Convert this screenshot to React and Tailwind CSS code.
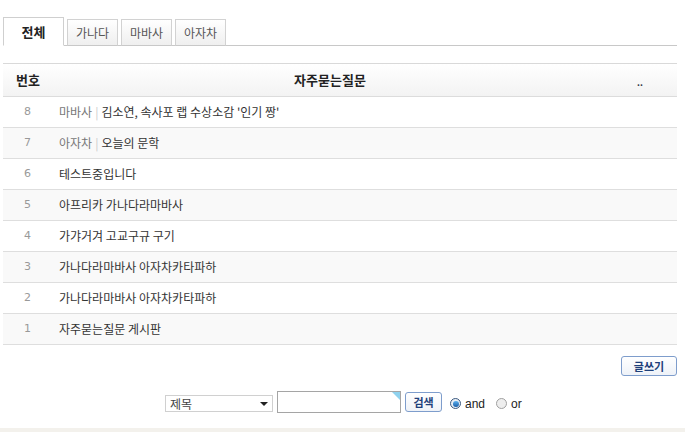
const TABS = ["전체", "가나다", "마바사", "아자차"];

const ROWS = [
  { no: 8, cat: "마바사", title: "김소연, 속사포 랩 수상소감 '인기 짱'" },
  { no: 7, cat: "아자차", title: "오늘의 문학" },
  { no: 6, title: "테스트중입니다" },
  { no: 5, title: "아프리카 가나다라마바사" },
  { no: 4, title: "가갸거겨 고교구규 구기" },
  { no: 3, title: "가나다라마바사 아자차카타파하" },
  { no: 2, title: "가나다라마바사 아자차카타파하" },
  { no: 1, title: "자주묻는질문 게시판" },
];

const font = { fontFamily: '"Noto Sans CJK KR", "Liberation Sans", sans-serif' };
const latin = { fontFamily: '"Liberation Sans", sans-serif' };

function Radio({ checked }) {
  return (
    <span
      className={`inline-flex w-[11px] h-[11px] rounded-full border items-center justify-center ${
        checked ? "border-[#3c5a80] bg-[#e8eef5]" : "border-[#a0a0a0] bg-[#eeeeee]"
      }`}
    >
      {checked && <span className="w-[6px] h-[6px] rounded-full bg-gradient-to-b from-[#5ab0f0] to-[#1a5ea8]" />}
    </span>
  );
}

export default function App() {
  return (
    <div className="bg-white w-[685px] h-[432px] flex flex-col text-[#333]" style={font}>
      <div className="pl-[3px] pr-[8px] flex-1">
        {/* tabs */}
        <div className="pt-[17px] flex items-end border-b border-[#c8c8c8] h-[46px]">
          {TABS.map((t, i) => (
            <div
              key={t}
              className={
                i === 0
                  ? "w-[61px] h-[29px] -mb-px border border-[#cfcfcf] border-b-white bg-white flex items-center justify-center text-[13px] font-bold text-[#222]"
                  : "ml-[3px] w-[51px] h-[27px] -mb-px border border-[#d2d2d2] border-b-[#c8c8c8] bg-gradient-to-b from-white to-[#efefef] flex items-center justify-center text-[12px] text-[#555]"
              }
            >
              {t}
            </div>
          ))}
        </div>

        {/* table */}
        <div className="mt-[17px] border-t border-[#d9d9d9]">
          <div className="h-[33px] flex items-center border-b border-[#dcdcdc] bg-gradient-to-b from-white to-[#f3f3f3] text-[13px] font-bold text-[#222]">
            <div className="w-[50px] text-center">번호</div>
            <div className="flex-1 text-center pr-[10px]">자주묻는질문</div>
            <div className="w-[60px] text-[9px] leading-none text-[#334] pt-[4px] pl-[20px]">..</div>
          </div>
          {ROWS.map((r, i) => (
            <div
              key={r.no}
              className={`h-[31px] flex items-center border-b border-[#dedede] text-[12px] ${
                i % 2 === 1 ? "bg-[#f9f9f9]" : "bg-white"
              }`}
            >
              <div className="w-[49px] text-center text-[11px] text-[#999]" style={{ fontFamily: '"DejaVu Sans", sans-serif' }}>
                {r.no}
              </div>
              <div className="pl-[7px] text-[#333]">
                {r.cat && (
                  <>
                    <span className="text-[#777]">{r.cat}</span>
                    <span className="text-[#ccc] mx-[3px]">|</span>
                  </>
                )}
                {r.title}
              </div>
            </div>
          ))}
        </div>

        {/* write button */}
        <div className="flex justify-end mt-[11px]">
          <button className="w-[56px] h-[20px] rounded-[3px] border border-[#7e9dcc] bg-gradient-to-b from-white to-[#eef2f8] text-[11px] font-bold text-[#1e3f7a] flex items-center justify-center">
            글쓰기
          </button>
        </div>

        {/* search */}
        <div className="flex items-center pl-[162px] mt-[15px] h-[22px] text-[12px]">
          <div className="w-[108px] h-[17px] mt-[3px] border border-[#d0d0d0] flex items-center justify-between pl-[4px] pr-[4px] text-[12px] text-[#444]">
            <span>제목</span>
            <span className="w-0 h-0 border-l-[4px] border-r-[4px] border-t-[4px] border-l-transparent border-r-transparent border-t-[#222]" />
          </div>
          <div className="relative ml-[4px] w-[124px] h-[22px] border border-[#a5a5a5] bg-white">
            <span className="absolute top-0 right-0 w-0 h-0 border-l-[8px] border-t-[8px] border-l-transparent border-t-[#8fd2ee]" />
          </div>
          <button className="ml-[4px] w-[37px] h-[20px] rounded-[3px] border border-[#7e9dcc] bg-gradient-to-b from-white to-[#eef2f8] text-[11px] font-bold text-[#1e3f7a] flex items-center justify-center">
            검색
          </button>
          <div className="ml-[8px] mt-[3px] flex items-center gap-[4px]">
            <Radio checked />
            <span className="text-[12px] leading-none text-[#222]" style={latin}>and</span>
          </div>
          <div className="ml-[11px] mt-[3px] flex items-center gap-[4px]">
            <Radio />
            <span className="text-[12px] leading-none text-[#222]" style={latin}>or</span>
          </div>
        </div>
      </div>
      <div className="h-[4px] bg-[#f3f1ec]" />
    </div>
  );
}
